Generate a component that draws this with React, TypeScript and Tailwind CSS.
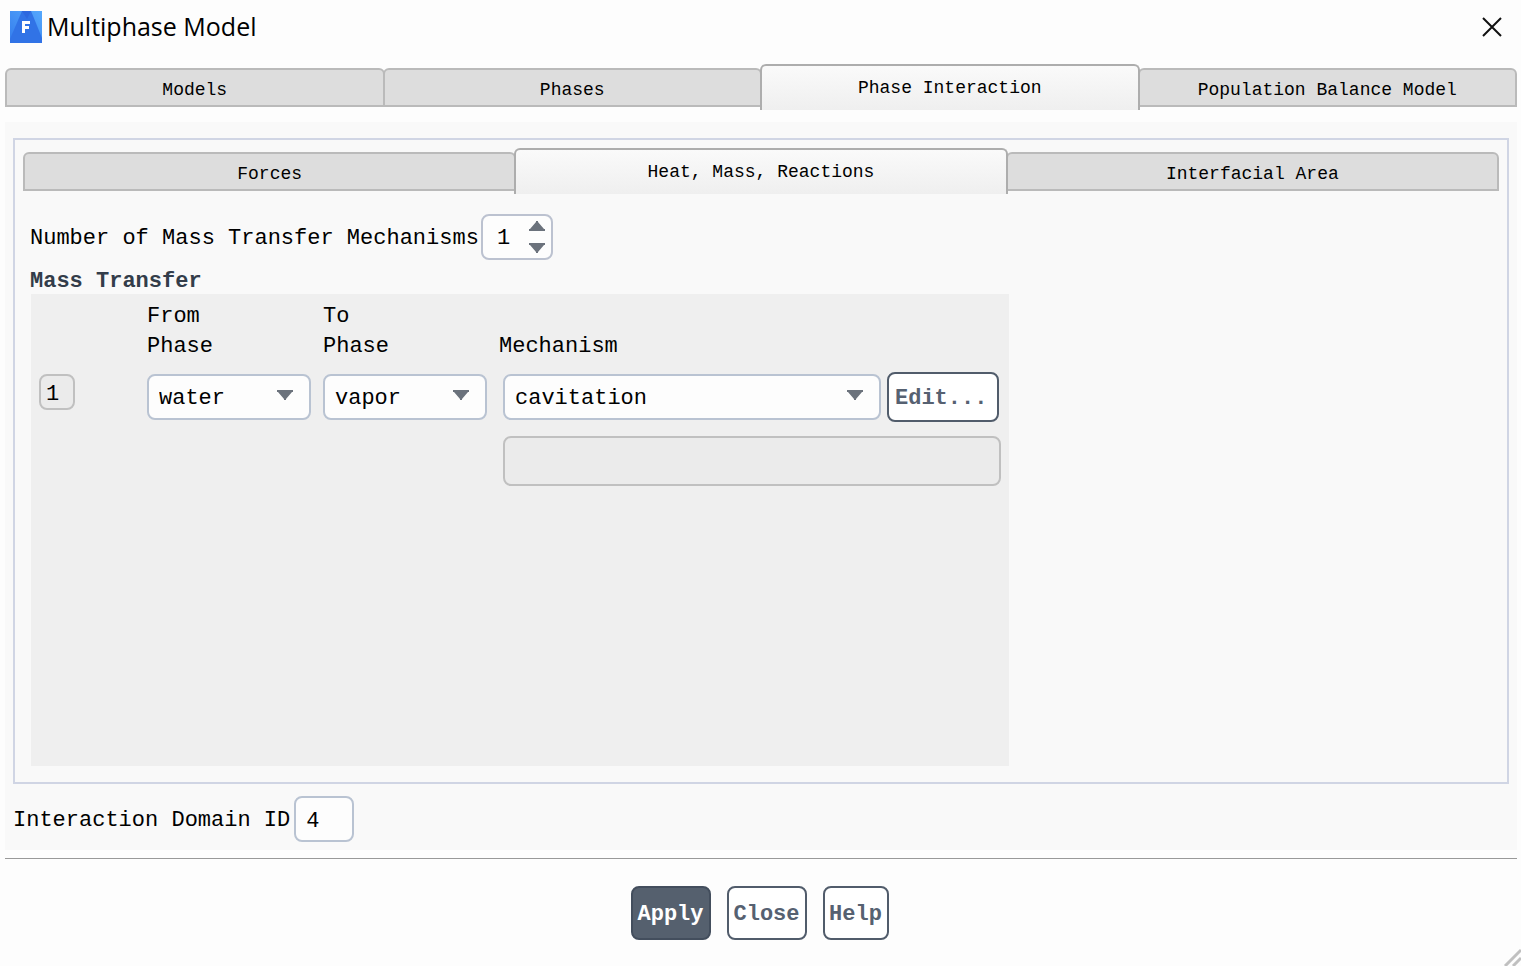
import { useState } from "react";
import clsx from "clsx";

interface TabBarProps {
  label: string;
  tabs: string[];
  active: string;
  onChange: (tab: string) => void;
}

interface DropdownProps {
  label: string;
  options: string[];
  className?: string;
}

const MAIN_TABS = ["Models", "Phases", "Phase Interaction", "Population Balance Model"];
const INTERACTION_TABS = ["Forces", "Heat, Mass, Reactions", "Interfacial Area"];

const TabBar = ({ label, tabs, active, onChange }: TabBarProps) => (
  <div role="tablist" aria-label={label} className="flex h-[46px] items-start">
    {tabs.map((tab, index) => (
      <button
        key={tab}
        type="button"
        role="tab"
        aria-selected={tab === active}
        onClick={() => onChange(tab)}
        className={clsx(
          "flex-1 basis-0 border-2 text-[18px] leading-6 whitespace-nowrap",
          index > 0 && "-ml-0.5",
          tab === active
            ? "relative z-10 h-[46px] rounded-t-md border-b-0 border-[#adadad] bg-linear-to-b from-[#fafafa] to-[#efefef]"
            : "mt-1 h-[39px] rounded-t-md border-[#bababa] bg-[#dddddd] pt-1"
        )}
      >
        {tab}
      </button>
    ))}
  </div>
);

const Triangle = ({ up = false }: { up?: boolean }) => (
  <svg width="16" height="10" viewBox="0 0 16 10" aria-hidden="true">
    <path d={up ? "M0 10V8h1L7 1V0h2v1l6 7h1v2z" : "M0 0v2h1l6 7v1h2V9l6-7h1V0z"} fill="#6b727c" />
  </svg>
);

const Dropdown = ({ label, options, className }: DropdownProps) => (
  <div className={clsx("relative", className)}>
    <select
      aria-label={label}
      className="h-[46px] w-full appearance-none rounded-lg border-2 border-[#b9c3d2] bg-[#fdfdfd] pl-2.5 pr-10 pt-1"
    >
      {options.map((option) => (
        <option key={option}>{option}</option>
      ))}
    </select>
    <span className="pointer-events-none absolute right-[18px] top-4">
      <Triangle />
    </span>
  </div>
);

const AppLogo = () => (
  <svg width="32" height="32" viewBox="0 0 32 32" aria-hidden="true">
    <defs>
      <linearGradient id="logo-side" x1="0" y1="1" x2="1" y2="0">
        <stop offset="0" stopColor="#347cec" />
        <stop offset="1" stopColor="#55a8fd" />
      </linearGradient>
    </defs>
    <rect width="32" height="32" fill="url(#logo-side)" />
    <path d="M12 0h9l11 27v5H0v-4z" fill="#3173e6" />
    <path d="M12 0h9l-4 8z" fill="#2d68df" />
    <path d="M12 22V10h8v3h-5v2h4v3h-4v4z" fill="#fff" />
  </svg>
);

export default function App() {
  const [mainTab, setMainTab] = useState("Phase Interaction");
  const [interactionTab, setInteractionTab] = useState("Heat, Mass, Reactions");
  const [mechanisms, setMechanisms] = useState(1);
  const [domainId, setDomainId] = useState("4");

  return (
    <div className="relative flex min-h-screen flex-col bg-[#fdfdfd] pl-[5px] pr-1 font-['Liberation_Mono',monospace] text-[22px] leading-[30px] text-black">
      <header className="flex h-16 items-start justify-between pl-[5px] pr-[13px] pt-[11px]">
        <div className="flex items-start gap-[5px]">
          <AppLogo />
          <h1 className="font-['Open_Sans',sans-serif] text-[25px] leading-[30px]">Multiphase Model</h1>
        </div>
        <button type="button" aria-label="Close window" className="flex h-8 w-6 items-center justify-center">
          <svg width="20" height="20" viewBox="0 0 20 20" aria-hidden="true">
            <path d="M1 1l18 18M19 1L1 19" stroke="#111" strokeWidth="2" />
          </svg>
        </button>
      </header>

      <TabBar label="Multiphase model" tabs={MAIN_TABS} active={mainTab} onChange={setMainTab} />

      <main className="mt-3 flex flex-1 flex-col bg-[#f9f9f9] p-2 pt-4">
        <section className="flex flex-1 flex-col border-2 border-[#d0d5e4] p-2 pb-4">
          <TabBar
            label="Phase interaction"
            tabs={INTERACTION_TABS}
            active={interactionTab}
            onChange={setInteractionTab}
          />

          <div className="mt-5 flex items-center gap-0.5 pl-[7px]">
            <label htmlFor="mechanisms" className="whitespace-nowrap pt-1">
              Number of Mass Transfer Mechanisms
            </label>
            <div className="flex h-[46px] w-[72px] items-center rounded-lg border-2 border-[#bcc2d0] bg-[#fdfdfd]">
              <input
                id="mechanisms"
                type="text"
                inputMode="numeric"
                value={mechanisms}
                onChange={(e) => setMechanisms(Number(e.target.value) || 0)}
                className="w-[46px] min-w-0 pl-3.5 pt-1 outline-none"
              />
              <div className="flex flex-col gap-3">
                <button type="button" aria-label="Increase" onClick={() => setMechanisms(mechanisms + 1)}>
                  <Triangle up />
                </button>
                <button
                  type="button"
                  aria-label="Decrease"
                  onClick={() => setMechanisms(Math.max(0, mechanisms - 1))}
                >
                  <Triangle />
                </button>
              </div>
            </div>
          </div>

          <h2 className="pl-[7px] pt-2.5 font-bold leading-6 text-[#333d4a]">Mass Transfer</h2>

          {/* Mass transfer mechanisms */}
          <div className="ml-2 w-full max-w-[978px] flex-1 bg-[#efefef] px-2 pt-2">
            <div className="grid grid-cols-[108px_176px_176px_1fr]">
              <span />
              <span>
                From
                <br />
                Phase
              </span>
              <span>
                To
                <br />
                Phase
              </span>
              <span className="self-end">Mechanism</span>
            </div>

            <div className="mt-2.5 grid grid-cols-[108px_176px_176px_1fr]">
              <input
                aria-label="Mechanism number"
                readOnly
                value="1"
                className="mt-0.5 h-9 w-9 rounded-lg border-2 border-[#c0c0c0] bg-[#ebebeb] pl-[5px] pt-1 outline-none"
              />
              <Dropdown label="From phase" options={["water", "vapor"]} className="mt-0.5 w-[164px]" />
              <Dropdown label="To phase" options={["vapor", "water"]} className="mt-0.5 w-[164px]" />
              <div className="pl-1">
                <div className="flex items-center gap-1.5 pr-0.5">
                  <Dropdown
                    label="Mechanism"
                    options={["cavitation", "evaporation-condensation", "boiling"]}
                    className="flex-1"
                  />
                  <button
                    type="button"
                    className="h-[50px] w-28 rounded-lg border-2 border-[#515c6b] bg-white pl-1.5 pt-1 text-left font-bold text-[#566171]"
                  >
                    Edit...
                  </button>
                </div>
                <input
                  aria-label="Mechanism details"
                  disabled
                  className="mt-3.5 block h-[50px] w-full rounded-lg border-2 border-[#c0c0c0] bg-[#ebebeb] px-2.5"
                />
              </div>
            </div>
          </div>
        </section>

        <div className="mt-3 flex items-center gap-1">
          <label htmlFor="domain-id" className="pt-1">
            Interaction Domain ID
          </label>
          <input
            id="domain-id"
            type="text"
            value={domainId}
            onChange={(e) => setDomainId(e.target.value)}
            className="h-[46px] w-[60px] rounded-lg border-2 border-[#b9c3d2] bg-[#fdfdfd] pl-2.5 pt-1 outline-none"
          />
        </div>
      </main>

      <footer className="mt-2 flex justify-center gap-4 border-t border-[#999999] pb-[26px] pr-[3px] pt-[27px] font-bold">
        <button
          type="button"
          className="h-[54px] w-20 rounded-lg border-2 border-[#434e5d] bg-[#55606e] pt-1 text-white"
        >
          Apply
        </button>
        <button
          type="button"
          className="h-[54px] w-20 rounded-lg border-2 border-[#515c6b] bg-white pt-1 text-[#566171]"
        >
          Close
        </button>
        <button
          type="button"
          className="h-[54px] w-[66px] rounded-lg border-2 border-[#515c6b] bg-white pt-1 text-[#566171]"
        >
          Help
        </button>
      </footer>

      {/* Resize grip */}
      <svg className="absolute bottom-0 right-0" width="18" height="18" viewBox="0 0 18 18" aria-hidden="true">
        <path d="M2 18L18 2M10 18l8-8" stroke="#c0c0c0" strokeWidth="3" />
      </svg>
    </div>
  );
}
